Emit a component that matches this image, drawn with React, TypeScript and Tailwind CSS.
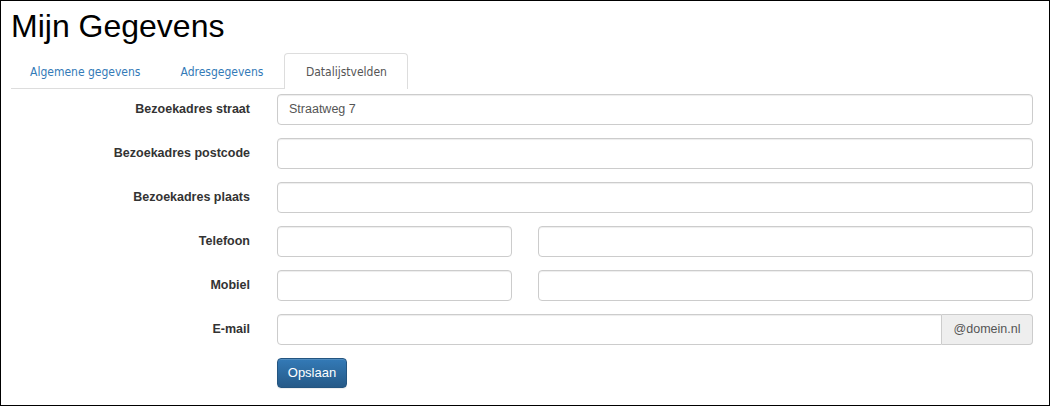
import React from "react";

const arial = { fontFamily: '"Liberation Sans", Arial, sans-serif' };

function Input({ className = "", value = "" }: { className?: string; value?: string }) {
  return (
    <div
      className={`h-[31px] border border-[#cccccc] rounded-[4px] bg-white shadow-[inset_0_1px_1px_rgba(0,0,0,0.075)] flex items-center pl-[11px] text-[12.5px] text-[#555555] ${className}`}
    >
      {value}
    </div>
  );
}

function Row({ label, children }: { label: string; children: React.ReactNode }) {
  return (
    <div className="flex items-center h-[31px]">
      <div className="w-[249px] text-right text-[12.5px] font-bold text-[#333333]">{label}</div>
      <div className="ml-[27px] w-[756px] flex">{children}</div>
    </div>
  );
}

export default function App() {
  const tabFont = { fontFamily: '"DejaVu Sans Condensed", "DejaVu Sans", sans-serif' };
  return (
    <div className="w-[1050px] h-[406px] border border-black bg-white overflow-hidden" style={arial}>
      <div className="pl-[10px] pt-[7px] h-[52px] text-[32px] leading-[36px] text-black">Mijn Gegevens</div>
      <div className="ml-[10px] flex items-end h-[36px] relative" style={tabFont}>
        <div className="absolute left-0 bottom-0 w-[273px] h-px bg-[#dddddd]" />
        <div className="relative h-[35px] px-[19px] flex items-center text-[12px] [font-stretch:condensed] text-[#337ab7] mr-[2px]">
          Algemene gegevens
        </div>
        <div className="relative h-[35px] px-[19px] flex items-center text-[12px] [font-stretch:condensed] text-[#337ab7] mr-[2px]">
          Adresgegevens
        </div>
        <div className="relative h-[36px] px-[18px] flex items-center text-[12px] [font-stretch:condensed] text-[#555555] border border-b-0 border-[#dddddd] rounded-t-[4px] bg-white w-[124px] justify-center">
          Datalijstvelden
        </div>
      </div>
      <div className="pt-[5px] flex flex-col gap-[13px]">
        <Row label="Bezoekadres straat">
          <Input className="w-full" value="Straatweg 7" />
        </Row>
        <Row label="Bezoekadres postcode">
          <Input className="w-full" />
        </Row>
        <Row label="Bezoekadres plaats">
          <Input className="w-full" />
        </Row>
        <Row label="Telefoon">
          <Input className="w-[235px]" />
          <Input className="w-[495px] ml-[26px]" />
        </Row>
        <Row label="Mobiel">
          <Input className="w-[235px]" />
          <Input className="w-[495px] ml-[26px]" />
        </Row>
        <Row label="E-mail">
          <Input className="flex-1 rounded-r-none" />
          <div className="w-[91px] h-[31px] border border-l-0 border-[#cccccc] rounded-r-[4px] bg-[#eeeeee] flex items-center justify-center text-[12.5px] text-[#555555]">
            @domein.nl
          </div>
        </Row>
        <div className="flex">
          <div className="ml-[276px] w-[70px] h-[30px] rounded-[4px] border border-[#245580] bg-gradient-to-b from-[#337ab7] to-[#265a88] text-white text-[13px] flex items-center justify-center shadow-[inset_0_1px_0_rgba(255,255,255,0.15),0_1px_1px_rgba(0,0,0,0.075)]">
            Opslaan
          </div>
        </div>
      </div>
    </div>
  );
}
